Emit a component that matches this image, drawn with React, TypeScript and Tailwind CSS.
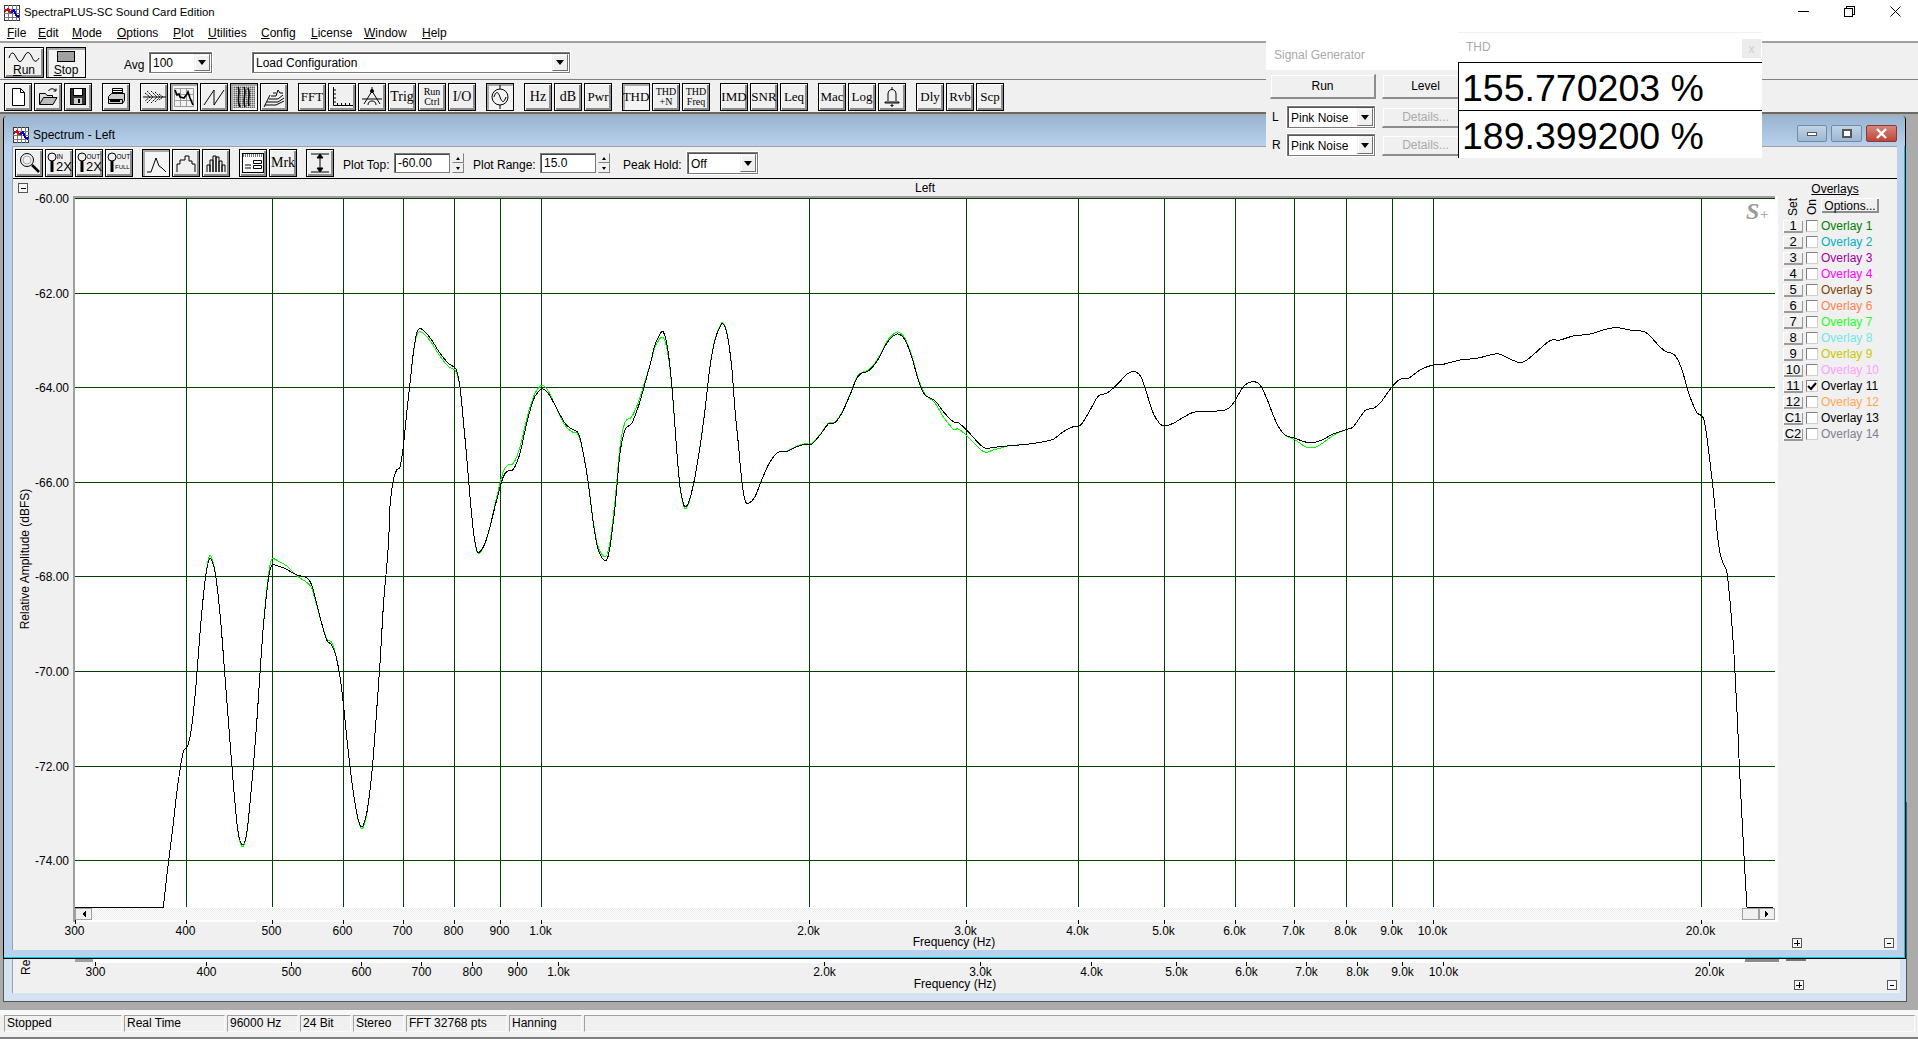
import React from "react";

// Menu entries carry the width of their slot in the native menu bar
const menus = [
    { label: "File", cls: "w-[31px]" },
    { label: "Edit", cls: "w-[34px]" },
    { label: "Mode", cls: "w-[45px]" },
    { label: "Options", cls: "w-[56px]" },
    { label: "Plot", cls: "w-[35px]" },
    { label: "Utilities", cls: "w-[53px]" },
    { label: "Config", cls: "w-[50px]" },
    { label: "License", cls: "w-[53px]" },
    { label: "Window", cls: "w-[58px]" },
    { label: "Help", cls: "w-[40px]" },
];

const overlays = [
    { set: "1", label: "Overlay 1", cls: "text-[#008000]" },
    { set: "2", label: "Overlay 2", cls: "text-[#00b0c0]" },
    { set: "3", label: "Overlay 3", cls: "text-[#a000a0]" },
    { set: "4", label: "Overlay 4", cls: "text-[#ff00ff]" },
    { set: "5", label: "Overlay 5", cls: "text-[#804000]" },
    { set: "6", label: "Overlay 6", cls: "text-[#ff8050]" },
    { set: "7", label: "Overlay 7", cls: "text-[#20ff20]" },
    { set: "8", label: "Overlay 8", cls: "text-[#70e8e8]" },
    { set: "9", label: "Overlay 9", cls: "text-[#c8c800]" },
    { set: "10", label: "Overlay 10", cls: "text-[#ffa0ff]" },
    { set: "11", label: "Overlay 11", cls: "text-black", on: true },
    { set: "12", label: "Overlay 12", cls: "text-[#ffa850]" },
    { set: "C1", label: "Overlay 13", cls: "text-black" },
    { set: "C2", label: "Overlay 14", cls: "text-[#808090]" },
];

const status = [
    { label: "Stopped", cls: "w-[118px]" },
    { label: "Real Time", cls: "w-[101px]" },
    { label: "96000 Hz", cls: "w-[71px]" },
    { label: "24 Bit", cls: "w-[51px]" },
    { label: "Stereo", cls: "w-[51px]" },
    { label: "FFT 32768 pts", cls: "w-[101px]" },
    { label: "Hanning", cls: "w-[73px]" },
    { label: "", cls: "w-[1331px]" },
];

// Curve traced off the reference, as [x, y] pairs in crop coordinates
const crop = (ox: number, oy: number, sy: number, pts: number[]) => {
    const out: [number, number][] = [];
    for (let i = 0; i < pts.length; i += 2) {
        out.push([ox + pts[i] / 3, oy + pts[i + 1] / sy]);
    }
    return out;
};

const curve: [number, number][] = [
    ...crop(150, 540, 3, [
        40, 1101, 50, 1010, 60, 930, 70, 850, 80, 760, 90, 690, 100, 635, 112, 620, 122, 580, 130, 520, 140, 410, 150,
        280, 160, 170, 170, 90, 181, 55, 195, 95, 205, 170, 215, 280, 225, 410, 235, 540, 245, 670, 255, 790, 265, 880,
        278, 915, 290, 880, 300, 790, 310, 680, 320, 550, 330, 400, 340, 260, 350, 160, 358, 100, 366, 75, 385, 78, 410,
        88, 440, 105, 470, 113, 485, 135, 500, 190, 515, 250, 530, 300, 545, 315, 557, 345, 570, 410, 580, 490, 590, 590,
        600, 680, 612, 770, 625, 840, 637, 860, 650, 820, 660, 750, 670, 650, 680, 510, 690, 370, 700, 200, 710, 80, 716,
        0,
    ]),
    ...crop(150, 310, 3, [
        720, 590, 730, 510, 740, 480, 750, 470, 760, 410, 770, 310, 780, 220, 790, 130, 800, 70, 810, 56, 825, 65, 845,
        90, 870, 130, 895, 160, 918, 178, 930, 230, 940, 330, 950, 440, 960, 560, 970, 660, 980, 720, 990, 725, 1005,
        700, 1020, 650, 1040, 570, 1060, 500, 1075, 482, 1090, 478, 1110, 430, 1130, 340, 1150, 270, 1165, 245, 1178,
        237, 1195, 250, 1220, 295, 1245, 340, 1265, 357, 1285, 370, 1300, 430, 1315, 520, 1330, 640, 1345, 720, 1367,
        752, 1380, 710, 1395, 590, 1410, 430, 1425, 360, 1445, 340, 1465, 290, 1485, 220, 1500, 165,
    ]),
    ...crop(640, 310, 3, [
        45, 105, 60, 72, 70, 66, 80, 100, 90, 170, 100, 280, 110, 420, 120, 530, 130, 580, 138, 590, 150, 565, 165, 500,
        180, 410, 195, 300, 210, 170, 225, 90, 240, 50, 250, 42, 262, 75, 275, 170, 285, 300, 295, 400, 305, 510, 315,
        570, 325, 580, 345, 560, 365, 510, 385, 465, 405, 435, 420, 425, 440, 425, 470, 410, 495, 403, 515, 402, 540,
        375, 565, 342, 585, 338, 605, 310, 630, 255, 650, 205, 665, 190, 685, 183, 710, 155, 740, 100, 760, 78, 775, 72,
        795, 90, 815, 140, 835, 210, 855, 255, 885, 272, 910, 305, 940, 335, 955, 338, 980, 360, 1030, 412, 1060, 412,
        1110, 407, 1160, 403, 1210, 395, 1240, 388, 1270, 365, 1300, 350, 1322, 345, 1345, 310, 1375, 258, 1400, 250,
        1430, 225, 1455, 198,
    ]),
    ...crop(1130, 310, 3, [
        0, 187, 20, 187, 35, 205, 50, 250, 70, 310, 90, 342, 105, 347, 130, 340, 160, 322, 190, 307, 220, 305, 285, 300,
        310, 280, 340, 230, 370, 215, 390, 225, 410, 265, 440, 340, 465, 375, 495, 385, 530, 397, 555, 397, 580, 388,
        610, 372, 650, 358, 670, 350, 705, 302, 730, 295, 750, 280, 785, 232, 810, 208, 835, 205, 870, 180, 905, 166,
        940, 163, 990, 150, 1040, 145, 1090, 133, 1110, 133, 1165, 157, 1190, 150, 1220, 125, 1260, 92, 1290, 90, 1330,
        78, 1380, 72, 1430, 57, 1460, 53, 1500, 60,
    ]),
    ...crop(1600, 310, 2.57, [
        130, 55, 150, 67, 180, 95, 200, 108, 220, 113, 235, 130, 250, 165, 265, 210, 280, 245, 292, 265, 305, 272, 313,
        285, 322, 335, 330, 390, 338, 450, 345, 510, 352, 575, 360, 625, 370, 652, 380, 672, 388, 730, 395, 800, 402,
        885, 407, 970, 413, 1070, 418, 1170, 424, 1270, 430, 1370, 435, 1450, 441, 1535,
    ]),
];

// Where the green trace leaves the black one: [x, dy]
const greenOffset: [number, number][] = [
    [75, 0], [205, 0], [210, -3], [216, 0], [236, 0], [243, 2], [250, 0], [262, 0], [272, -6], [285, -4], [295, 0], [305, 5],
    [313, 3], [322, 0], [331, -3], [337, 0], [355, 0], [363, 2], [372, 0], [410, 0], [420, 3], [450, 3], [470, 0], [480, 1],
    [490, 0], [505, -6], [520, -6], [533, -3], [542, -4], [555, 0], [570, 3], [585, 0], [627, -8], [640, -4], [650, 0],
    [663, 6], [675, 0], [686, 2], [695, 0], [723, -1], [740, 0], [880, -1], [895, -2], [925, -1], [940, 4], [950, 8], [960, 6],
    [985, 4], [1010, 0], [1290, 0], [1310, 6], [1340, 0], [1773, 0],
];

const offsetAt = (x: number) => {
    for (let i = 1; i < greenOffset.length; i++) {
        const [x0, d0] = greenOffset[i - 1];
        const [x1, d1] = greenOffset[i];
        if (x <= x1) return d0 + ((d1 - d0) * (x - x0)) / (x1 - x0);
    }
    return 0;
};

// Catmull-Rom through the traced points
const toPath = (pts: [number, number][]) => {
    let d = `M${pts[0][0]} ${pts[0][1]}`;
    for (let i = 0; i < pts.length - 1; i++) {
        const p0 = pts[Math.max(i - 1, 0)];
        const p1 = pts[i];
        const p2 = pts[i + 1];
        const p3 = pts[Math.min(i + 2, pts.length - 1)];
        const c1x = p1[0] + (p2[0] - p0[0]) / 6;
        const c1y = p1[1] + (p2[1] - p0[1]) / 6;
        const c2x = p2[0] - (p3[0] - p1[0]) / 6;
        const c2y = p2[1] - (p3[1] - p1[1]) / 6;
        d += `C${c1x.toFixed(1)} ${c1y.toFixed(1)} ${c2x.toFixed(1)} ${c2y.toFixed(1)} ${p2[0].toFixed(1)} ${p2[1].toFixed(1)}`;
    }
    return d;
};

const blackPath = toPath(curve);
const greenPath = toPath(curve.map(([x, y]) => [x, y + offsetAt(x)] as [number, number]));

const freqs = [
    { f: 300, label: "300" },
    { f: 400, label: "400" },
    { f: 500, label: "500" },
    { f: 600, label: "600" },
    { f: 700, label: "700" },
    { f: 800, label: "800" },
    { f: 900, label: "900" },
    { f: 1000, label: "1.0k" },
    { f: 2000, label: "2.0k" },
    { f: 3000, label: "3.0k" },
    { f: 4000, label: "4.0k" },
    { f: 5000, label: "5.0k" },
    { f: 6000, label: "6.0k" },
    { f: 7000, label: "7.0k" },
    { f: 8000, label: "8.0k" },
    { f: 9000, label: "9.0k" },
    { f: 10000, label: "10.0k" },
    { f: 20000, label: "20.0k" },
];
const frontX = (f: number) => Math.floor(75 + 891.8 * Math.log10(f / 300)) + 0.5;
const backX = (f: number) => Math.round(94 + 885 * Math.log10(f / 300)) + 0.5;
const dbRows = [-60, -62, -64, -66, -68, -70, -72, -74];
const dbY = (db: number) => Math.round(198 + (-60 - db) * 47.3) + 0.5;

function Btn({ pressed, className, children }: { pressed?: boolean; className?: string; children?: React.ReactNode }) {
    return (
        <div
            className={`flex items-center justify-center border border-black overflow-hidden ${
                pressed
                    ? "bg-[#f4f4f4] shadow-[inset_2px_2px_0_#a8a8a8]"
                    : "bg-[#f0f0f0] shadow-[inset_1px_1px_0_#fff,inset_-2px_-2px_0_#8c8c8c]"
            } ${className ?? "w-7 h-7"}`}
        >
            {children}
        </div>
    );
}

function Serif({ top, bottom, big }: { top: string; bottom?: string; big?: boolean }) {
    return (
        <div className={`font-['Liberation_Serif',serif] text-center -mt-px ${bottom ? "text-[10px] leading-[10px]" : big ? "text-[14px]" : "text-[13px]"}`}>
            <div>{top}</div>
            {bottom && <div>{bottom}</div>}
        </div>
    );
}

function Ico({ children }: { children: React.ReactNode }) {
    return (
        <svg width="24" height="24" viewBox="0 0 24 24" fill="none" stroke="black" strokeWidth="1">
            {children}
        </svg>
    );
}

function Arrow() {
    return <div className="w-0 h-0 border-l-[4px] border-r-[4px] border-t-[5px] border-l-transparent border-r-transparent border-t-black" />;
}

function Combo({ value, className, arrowCls }: { value: string; className: string; arrowCls?: string }) {
    return (
        <div className={`flex bg-white border border-[#7a7a7a] shadow-[inset_1px_1px_0_#555,0_0_0_1px_#fff] pl-[3px] text-[12px] ${className}`}>
            <span className="flex-1 flex items-center whitespace-nowrap pt-px">{value}</span>
            <div className={`flex items-center justify-center bg-[#f0f0f0] border border-[#f0f0f0] border-r-[#707070] border-b-[#707070] shadow-[inset_1px_1px_0_#fff] m-px ${arrowCls ?? "w-[16px]"}`}>
                <Arrow />
            </div>
        </div>
    );
}

function Spin() {
    return (
        <div className="flex flex-col w-[12px] h-[20px] ml-[2px]">
            {[0, 1].map((i) => (
                <div key={i} className="flex-1 flex items-center justify-center border border-[#f0f0f0] border-r-[#808080] border-b-[#808080] bg-[#f0f0f0]">
                    <div className={`w-0 h-0 border-l-[2px] border-r-[2px] border-l-transparent border-r-transparent ${i === 0 ? "border-b-[3px] border-b-black" : "border-t-[3px] border-t-black"}`} />
                </div>
            ))}
        </div>
    );
}

function InlineInput({ value }: { value: string }) {
    return (
        <div className="flex items-center w-[56px] h-[20px] bg-white border border-[#7a7a7a] shadow-[inset_1px_1px_0_#444] pl-[3px] text-[12px]">{value}</div>
    );
}

function AppIcon() {
    return (
        <svg width="16" height="16" viewBox="0 0 16 16" shapeRendering="crispEdges">
            <rect x="0.5" y="0.5" width="15" height="15" fill="#fff" stroke="#333" />
            <path d="M4 0V16M8 0V16M12 0V16M0 4H16M0 8H16M0 12H16" stroke="#777" />
            <path d="M1 6L4 4L6 7L9 6" stroke="#e00000" strokeWidth="2" fill="none" />
            <path d="M7 8L10 5L12 10L15 12" stroke="#0000d0" strokeWidth="2" fill="none" />
        </svg>
    );
}

function MiniBox({ plus }: { plus?: boolean }) {
    return (
        <svg width="10" height="10" viewBox="0 0 10 10" shapeRendering="crispEdges">
            <rect x="0.5" y="0.5" width="9" height="9" fill="#f8f8f8" stroke="#555" />
            <path d={plus ? "M2 5H8M5 2V8" : "M3 5H7"} stroke="#000" />
        </svg>
    );
}

// Row of tool buttons, one array per group
const mainTools: React.ReactNode[][] = [
    [
        <Btn key="new">
            <Ico><path d="M6.5 3.5H14.5L18.5 7.5V20.5H6.5Z M14.5 3.5V7.5H18.5" fill="#fff" /></Ico>
        </Btn>,
        <Btn key="open">
            <Ico>
                <path d="M3.5 19.5V8.5H9.5L11 10.5H16.5V13" fill="#ddd" />
                <path d="M3.5 19.5H17L21 12.5H7.5Z" fill="#bbb" />
                <path d="M12.5 6C14 3 18 3 20 6M20 6V3.5M20 6H17.5" />
            </Ico>
        </Btn>,
        <Btn key="save">
            <Ico>
                <rect x="4.5" y="3.5" width="15" height="16" fill="#333" />
                <rect x="7.5" y="3.5" width="9" height="7" fill="#fff" />
                <rect x="8" y="13" width="8" height="6" fill="#ccc" stroke="none" />
                <rect x="12" y="14" width="2" height="4" fill="#000" stroke="none" />
            </Ico>
        </Btn>,
    ],
    [
        <Btn key="print">
            <Ico>
                <path d="M8.5 3.5H18.5V10.5H8.5Z M9 5.5H18M9 7.5H18" fill="#fff" />
                <path d="M4.5 11.5L7.5 8.5H20.5V15.5L18.5 18.5H4.5Z" fill="#ccc" />
                <path d="M4.5 14.5H18.5V18.5" />
                <path d="M6 16H16" strokeWidth="2" />
            </Ico>
        </Btn>,
    ],
    [
        <Btn key="wave">
            <Ico>
                <path d="M1 12H24" />
                <path d="M3 8L8 12L3 16M5 6L11 12L5 18M9 6L15 12L9 18M13 7L18 12L13 17M17 9L21 12L17 15" strokeDasharray="2 1" />
            </Ico>
        </Btn>,
        <Btn key="spec" pressed>
            <Ico>
                <path d="M2.5 3.5H21.5V21.5H2.5Z M8.5 3.5V21.5M14.5 3.5V21.5M2.5 9.5H21.5M2.5 15.5H21.5" stroke="#999" />
                <path d="M3 5L5 10L7 9L8 12L12 13L15 9L16 7L18 13L21 20" strokeWidth="1.7" />
            </Ico>
        </Btn>,
        <Btn key="saw">
            <Ico><path d="M2 20L12 5V20L22 5" /></Ico>
        </Btn>,
        <Btn key="water" pressed>
            <svg width="24" height="24" viewBox="0 0 24 24" fill="none" stroke="black">
                <defs>
                    <pattern id="speck" width="2" height="2" patternUnits="userSpaceOnUse">
                        <rect width="2" height="2" fill="#aaa" stroke="none" />
                        <rect width="1" height="1" fill="#666" stroke="none" />
                        <rect x="1" y="1" width="1" height="1" fill="#ddd" stroke="none" />
                    </pattern>
                </defs>
                <rect x="1" y="1" width="22" height="22" fill="url(#speck)" stroke="none" />
                <path d="M6 2C9 7 4 14 8 22M12 2C15 8 10 14 13 22M16 3C19 9 15 15 17 21" strokeWidth="1.6" />
            </svg>
        </Btn>,
        <Btn key="3d">
            <Ico>
                <path d="M3 20H14L22 16M5 17H16L22 13M7 14H16L21 10M9 11H14L16 5L18 8L21 8M11 8H14" />
                <path d="M2 22L8 10" />
            </Ico>
        </Btn>,
    ],
    [
        <Btn key="fft"><Serif top="FFT" /></Btn>,
        <Btn key="axis">
            <Ico>
                <path d="M3.5 2V20.5H23" />
                <path d="M3 5H6M3 9H6M3 13H6M3 17H6M7.5 18V20M11.5 18V20M15.5 18V20M19.5 18V20" />
            </Ico>
        </Btn>,
        <Btn key="compass">
            <Ico>
                <path d="M12 2V6M12 6L4 19M12 6L20 19M2 14H22" />
                <path d="M8 20C8 17 10 16 12 16C14 16 16 17 16 20" />
                <circle cx="12" cy="6" r="1.5" fill="#000" />
            </Ico>
        </Btn>,
        <Btn key="trig"><Serif top="Trig" big /></Btn>,
        <Btn key="run"><Serif top="Run" bottom="Ctrl" /></Btn>,
        <Btn key="io"><Serif top="I/O" big /></Btn>,
    ],
    [
        <Btn key="gen" pressed>
            <Ico>
                <circle cx="12" cy="12" r="8" />
                <path d="M12 0V4M12 20V24M6 12C8 6 10 6 12 12C14 18 16 18 18 12" />
            </Ico>
        </Btn>,
    ],
    [
        <Btn key="hz"><Serif top="Hz" big /></Btn>,
        <Btn key="db"><Serif top="dB" big /></Btn>,
        <Btn key="pwr"><Serif top="Pwr" /></Btn>,
    ],
    [
        <Btn key="thd" pressed><Serif top="THD" /></Btn>,
        <Btn key="thdn"><Serif top="THD" bottom="+N" /></Btn>,
        <Btn key="thdf"><Serif top="THD" bottom="Freq" /></Btn>,
    ],
    [
        <Btn key="imd"><Serif top="IMD" /></Btn>,
        <Btn key="snr"><Serif top="SNR" /></Btn>,
        <Btn key="leq"><Serif top="Leq" /></Btn>,
    ],
    [
        <Btn key="mac"><Serif top="Mac" /></Btn>,
        <Btn key="log"><Serif top="Log" /></Btn>,
        <Btn key="bell">
            <Ico>
                <path d="M12 2V4M8 16V9C8 6 10 4.5 12 4.5C14 4.5 16 6 16 9V16M5 17H19V18H5ZM11 20H13V21H11Z" />
            </Ico>
        </Btn>,
    ],
    [
        <Btn key="dly"><Serif top="Dly" /></Btn>,
        <Btn key="rvb"><Serif top="Rvb" /></Btn>,
        <Btn key="scp"><Serif top="Scp" /></Btn>,
    ],
];

function ZoomIcon({ top, bottom }: { top: string; bottom: string }) {
    const full = bottom === "FULL";
    return (
        <svg width="26" height="26" viewBox="0 0 26 26" fill="none" stroke="black">
            <circle cx="6" cy="7" r="4" />
            <path d="M6 11V22" strokeWidth="3" />
            <text x="10.5" y="9" fontSize="6.5" fill="#000" stroke="none">{top}</text>
            <text x={full ? 9 : 10} y={full ? 19 : 21} fontSize={full ? 6 : 13} fill="#000" stroke="none">{bottom}</text>
        </svg>
    );
}

function SpectrumTools() {
    return (
        <div className="flex items-start gap-[9px]">
            <div className="flex gap-0.5">
                <Btn>
                    <Ico>
                        <circle cx="10" cy="9" r="6.5" />
                        <circle cx="10" cy="9" r="4" stroke="#aaa" />
                        <path d="M15 14L22 21" strokeWidth="2.5" />
                    </Ico>
                </Btn>
                <Btn><ZoomIcon top="IN" bottom="2X" /></Btn>
                <Btn><ZoomIcon top="OUT" bottom="2X" /></Btn>
                <Btn><ZoomIcon top="OUT" bottom="FULL" /></Btn>
            </div>
            <div className="flex gap-0.5">
                <Btn pressed>
                    <Ico><path d="M3 21H7L12 7L15 15L18 17L22 21" /></Ico>
                </Btn>
                <Btn>
                    <Ico><path d="M3 21V13H6V9H11V5H15V10H18V13H21V21" /></Ico>
                </Btn>
                <Btn>
                    <Ico><path d="M3 21V14H6V21M6 21V9H9V21M9 21V5H12V21M12 21V6H15V21M15 21V10H18V21M18 21V14H21V21" /></Ico>
                </Btn>
            </div>
            <div className="flex gap-0.5">
                <Btn>
                    <Ico>
                        <rect x="1.5" y="2.5" width="21" height="19" fill="#fff" />
                        <path d="M2 4.5H22" strokeWidth="3" stroke="#777" strokeDasharray="1 1" />
                        <path d="M12.5 9.5H20.5V12.5H12.5ZM12.5 14.5H20.5V17.5H12.5ZM4 14H10M4 17H10" />
                    </Ico>
                </Btn>
                <Btn><Serif top="Mrk" big /></Btn>
            </div>
            <Btn>
                <Ico>
                    <path d="M3 3H21M3 21H21M12 4V20" />
                    <path d="M9 7L12 3L15 7ZM9 17L12 21L15 17Z" fill="#000" />
                </Ico>
            </Btn>
        </div>
    );
}

function FrontChart() {
    const textCls = "text-[12px] fill-black";
    return (
        <svg width="1765" height="771" viewBox="13 179 1765 771" className="flex-none">
            <defs>
                <pattern id="hatch" width="2" height="2" patternUnits="userSpaceOnUse">
                    <rect width="2" height="2" fill="#fff" />
                    <rect width="1" height="1" fill="#ececec" />
                    <rect x="1" y="1" width="1" height="1" fill="#ececec" />
                </pattern>
            </defs>
            <text x="925" y="192" textAnchor="middle" className={textCls}>Left</text>
            <g shapeRendering="crispEdges">
                <rect x="18.5" y="183.5" width="9" height="9" fill="#f8f8f8" stroke="#555" />
                <path d="M21 188H26" stroke="#000" />
                <rect x="73" y="196" width="1705" height="726" fill="#fff" />
                <path d="M73 196.5H1775M73.5 196V922M74.5 196V922" stroke="#a0a0a0" />
                <path d="M75 197.5H1775" stroke="#a0a0a0" />
                <rect x="75" y="908" width="1700" height="12" fill="url(#hatch)" />
                {dbRows.map((db) => (
                    <path key={db} d={`M75 ${dbY(db)}H1775`} stroke="#004000" />
                ))}
                {freqs.slice(1).map((t) => (
                    <path key={t.f} d={`M${frontX(t.f)} 198V907`} stroke="#004000" />
                ))}
                {freqs.map((t) => (
                    <path key={t.f} d={`M${frontX(t.f)} 920V924`} stroke="#000" />
                ))}
                {/* Scrollbar buttons */}
                <rect x="75.5" y="908.5" width="16" height="11" fill="#f0f0f0" stroke="#a0a0a0" />
                <path d="M82 914L86 910.5V917.5Z" fill="#000" />
                <rect x="1742.5" y="908.5" width="16" height="11" fill="#f0f0f0" stroke="#a0a0a0" />
                <rect x="1759.5" y="908.5" width="15" height="11" fill="#f0f0f0" stroke="#a0a0a0" />
                <path d="M1769 914L1765 910.5V917.5Z" fill="#000" />
            </g>
            <g fill="none" shapeRendering="crispEdges">
                <path d={greenPath} stroke="#00ff00" />
                <path d={blackPath} stroke="#000" />
                <path d="M75 907.5H163.5M1747 907.5H1773" stroke="#000" />
            </g>
            {dbRows.map((db) => (
                <text key={db} x="69" y={dbY(db) + 4} textAnchor="end" className={textCls}>{db.toFixed(2)}</text>
            ))}
            {freqs.map((t) => (
                <text key={t.f} x={frontX(t.f) - 1} y="935" textAnchor="middle" className={textCls}>{t.label}</text>
            ))}
            <text x="954" y="946" textAnchor="middle" className={textCls}>Frequency (Hz)</text>
            <text transform="rotate(-90 29 559)" x="29" y="559" textAnchor="middle" className={textCls}>Relative Amplitude (dBFS)</text>
            <text x="1746" y="219" fontSize="24" fontWeight="700" fontStyle="italic" fill="#9a9a9a" className="font-['Liberation_Serif',serif]">S</text>
            <text x="1760" y="219" fontSize="15" fill="#9a9a9a" className="font-['Liberation_Serif',serif]">+</text>
        </svg>
    );
}

function BackChart() {
    const textCls = "text-[12px] fill-black";
    return (
        <svg width="1888" height="34" viewBox="12 959 1888 34" className="flex-none overflow-hidden">
            <g shapeRendering="crispEdges">
                <rect x="92" y="959" width="1686" height="4" fill="#fff" />
                <rect x="74" y="959" width="18" height="3" fill="#a0a0a0" />
                <rect x="1744" y="959" width="34" height="3" fill="#8c8c8c" />
                <rect x="1785" y="959" width="20" height="2" fill="#777" />
                {freqs.map((t) => (
                    <path key={t.f} d={`M${backX(t.f)} 962V966`} stroke="#000" />
                ))}
                <rect x="1793.5" y="980.5" width="9" height="9" fill="#f8f8f8" stroke="#555" />
                <path d="M1795 985H1801M1798 982V988" stroke="#000" />
                <rect x="1886.5" y="980.5" width="9" height="9" fill="#f8f8f8" stroke="#555" />
                <path d="M1889 985H1893" stroke="#000" />
            </g>
            {freqs.map((t) => (
                <text key={t.f} x={backX(t.f)} y="976" textAnchor="middle" className={textCls}>{t.label}</text>
            ))}
            <text x="954" y="988" textAnchor="middle" className={textCls}>Frequency (Hz)</text>
            <text transform="rotate(-90 29 975)" x="29" y="975" className={textCls}>Re</text>
        </svg>
    );
}

function OverlayPanel() {
    return (
        <div className="flex-1 flex flex-col pl-[5px] text-[12px]">
            <div className="w-[104px] h-[14px] mt-[3px] text-center leading-[14px] underline">Overlays</div>
            <div className="flex h-[20px] mt-[2px]">
                <div className="w-[20px] h-[18px] flex items-center justify-center">
                    <span className="[writing-mode:vertical-rl] rotate-180 leading-none">Set</span>
                </div>
                <div className="w-[12px] ml-[3px] h-[18px] flex items-center justify-center">
                    <span className="[writing-mode:vertical-rl] rotate-180 leading-none">On</span>
                </div>
                <div className="ml-[3px] w-[58px] h-[15px] flex items-center justify-center bg-[#f0f0f0] shadow-[inset_1px_1px_0_#fff,inset_-2px_-2px_0_#8c8c8c]">Options...</div>
            </div>
            {overlays.map((o) => (
                <div key={o.set} className="flex items-center h-4">
                    <div className="w-5 h-[13px] flex items-center justify-center text-[13px] leading-[12px] pb-px bg-[#f0f0f0] shadow-[inset_1px_1px_0_#fff,inset_-1px_-2px_0_#9a9a9a]">{o.set}</div>
                    <div className="ml-[3px] w-[12px] h-[12px] flex items-center justify-center bg-white border border-[#d0d0d0] border-t-[#808080] border-l-[#808080]">
                        {o.on && (
                            <svg width="10" height="10" viewBox="0 0 10 10" fill="none" stroke="black" strokeWidth="2">
                                <path d="M1 5L4 8L9 2" />
                            </svg>
                        )}
                    </div>
                    <span className={`ml-[3px] ${o.cls}`}>{o.label}</span>
                </div>
            ))}
            <div className="mt-auto flex justify-between pl-[9px] pr-[3px] pb-[2px]">
                <MiniBox plus />
                <MiniBox />
            </div>
        </div>
    );
}

function CaptionButton({ className, children }: { className: string; children: React.ReactNode }) {
    return <div className={`h-[17px] flex items-center justify-center rounded-[2px] border ${className}`}>{children}</div>;
}

function SpectrumWindow() {
    return (
        <div className="absolute left-[3px] top-[2px] w-[1903px] h-[843px] flex flex-col rounded-t-[4px] bg-[#b9d1ea] border-x border-b border-black shadow-[inset_-1px_-1px_0_#00c8e6]">
            <div className="h-[30px] flex justify-between rounded-t-[4px] bg-gradient-to-b from-[#99b4d1] to-[#b9d1ea] pr-[8px]">
                <div className="flex items-center pl-[9px] pt-[8px] gap-[4px] text-[12px]">
                    <AppIcon />
                    <span>Spectrum - Left</span>
                </div>
                <div className="flex gap-[4px] pt-[9px]">
                    <CaptionButton className="w-[30px] border-[#6d8cab] bg-gradient-to-b from-[#c2d4e6] to-[#9db6d2]">
                        <div className="w-[10px] h-[4px] bg-white border border-[#555]" />
                    </CaptionButton>
                    <CaptionButton className="w-[31px] border-[#6d8cab] bg-gradient-to-b from-[#c2d4e6] to-[#9db6d2]">
                        <div className="w-[10px] h-[9px] bg-white border-2 border-[#555]" />
                    </CaptionButton>
                    <CaptionButton className="w-[31px] border-[#8a3a32] bg-gradient-to-b from-[#d8847a] to-[#b9473c]">
                        <svg width="13" height="11" viewBox="0 0 13 11" stroke="white" strokeWidth="2.4">
                            <path d="M2 1L11 10M11 1L2 10" />
                        </svg>
                    </CaptionButton>
                </div>
            </div>
            <div className="flex-1 flex flex-col ml-[8px] mr-[8px] mb-[8px] bg-[#f0f0f0] border-l border-t border-[#a0a0a0] text-[12px]">
                <div className="h-[32px] flex items-start pt-[2px] pl-[2px] border-b border-black">
                    <SpectrumTools />
                    <span className="ml-[9px] w-[51px] mt-[7px] whitespace-nowrap">Plot Top:</span>
                    <div className="mt-[4px] flex">
                        <InlineInput value="-60.00" />
                        <Spin />
                    </div>
                    <span className="ml-[9px] w-[67px] mt-[7px] whitespace-nowrap">Plot Range:</span>
                    <div className="mt-[4px] flex">
                        <InlineInput value="15.0" />
                        <Spin />
                    </div>
                    <span className="ml-[13px] w-[64px] mt-[7px] whitespace-nowrap">Peak Hold:</span>
                    <Combo value="Off" className="w-[71px] h-[22px] mt-[3px]" arrowCls="w-[16px]" />
                </div>
                <div className="flex-1 flex min-h-0">
                    <FrontChart />
                    <OverlayPanel />
                </div>
            </div>
        </div>
    );
}

function BackWindow() {
    return (
        <div className="absolute left-[3px] bottom-[8px] w-[1904px] h-[200px] flex flex-col justify-end bg-[#d4e3f2] border border-[#555]">
            <div className="ml-[8px] mr-[6px] mb-[8px] bg-[#f0f0f0] border-l border-[#a0a0a0] text-[12px] h-[60px] flex flex-col justify-end">
                <BackChart />
            </div>
        </div>
    );
}

function SignalGenerator() {
    const btn = "flex items-center justify-center bg-[#f0f0f0] border border-[#f0f0f0] border-r-[#8c8c8c] border-b-[#8c8c8c] border-b-2 border-r-2 shadow-[inset_1px_1px_0_#fff]";
    return (
        <div className="absolute left-[1266px] top-[39px] w-[192px] h-[118px] flex flex-col bg-[#f0f0f0] text-[12px]">
            <div className="h-[31px] bg-white flex items-center pl-[8px] text-[#aaaaaa]">Signal Generator</div>
            <div className="flex pl-[4px] pt-[4px]">
                <div className={`w-[106px] h-[25px] shrink-0 ${btn}`}>Run</div>
                <div className={`w-[88px] h-[25px] ml-[6px] shrink-0 ${btn}`}>Level</div>
            </div>
            {["L", "R"].map((ch, i) => (
                <div key={ch} className={`flex items-center pl-[6px] ${i === 0 ? "mt-[7px]" : "mt-[6px]"}`}>
                    <span className="w-[15px] shrink-0">{ch}</span>
                    <Combo value="Pink Noise" className="w-[88px] h-[22px] shrink-0" />
                    <div className={`w-[88px] h-[21px] ml-[7px] shrink-0 text-[#aaaaaa] ${btn}`}>Details...</div>
                </div>
            ))}
        </div>
    );
}

function ThdWindow() {
    return (
        <div className="absolute left-[1458px] top-[32px] w-[304px] h-[126px] flex flex-col bg-white border-t border-[#f0f0f0]">
            <div className="h-[29px] flex justify-between pl-[8px] text-[12px] text-[#aaaaaa]">
                <span className="mt-[5px]">THD</span>
                <div className="w-[19px] h-[19px] mt-[6px] mr-px bg-[#ececec] flex items-center justify-center text-[#cccccc]">x</div>
            </div>
            <div className="flex-1 flex flex-col border-l border-t border-black">
                <div className="h-[48px] flex items-center pl-[3px] pt-[4px] text-[37.5px] leading-none whitespace-nowrap border-b border-black">155.770203 %</div>
                <div className="flex-1 flex items-center pl-[3px] pt-[4px] text-[37.5px] leading-none whitespace-nowrap">189.399200 %</div>
            </div>
        </div>
    );
}

export default function App() {
    return (
        <div className="relative w-[1918px] h-[1039px] overflow-hidden flex flex-col bg-[#f0f0f0] text-black font-['Liberation_Sans',Arial,sans-serif]">
            {/* Title bar */}
            <div className="h-[24px] flex justify-between bg-white text-[12px]">
                <div className="flex items-center pl-[4px] gap-[4px] pt-px">
                    <AppIcon />
                    <span className="text-[11.4px]">SpectraPLUS-SC Sound Card Edition</span>
                </div>
                <div className="flex h-[22px]">
                    <div className="w-[46px] flex items-center justify-center">
                        <div className="w-[11px] h-px bg-black" />
                    </div>
                    <div className="w-[46px] flex items-center justify-center">
                        <svg width="11" height="11" viewBox="0 0 11 11" fill="none" stroke="black" shapeRendering="crispEdges">
                            <rect x="0.5" y="2.5" width="8" height="8" />
                            <path d="M2.5 2V0.5H10.5V8.5H9" />
                        </svg>
                    </div>
                    <div className="w-[46px] flex items-center justify-center">
                        <svg width="11" height="11" viewBox="0 0 11 11" stroke="black">
                            <path d="M0.5 0.5L10.5 10.5M10.5 0.5L0.5 10.5" />
                        </svg>
                    </div>
                </div>
            </div>
            {/* Menu */}
            <div className="h-[17px] flex items-center bg-white pl-[7px] text-[12px]">
                {menus.map((m) => (
                    <span key={m.label} className={m.cls}>
                        <u>{m.label[0]}</u>
                        {m.label.slice(1)}
                    </span>
                ))}
            </div>
            <div className="h-[2px] bg-[#a0a0a0]" />
            {/* Run / Stop strip */}
            <div className="h-[37px] flex items-start pt-[4px] pl-[4px] border-b border-[#808080] text-[12px]">
                <Btn className="w-10 h-[31px]">
                    <div className="flex flex-col items-center leading-[12px]">
                        <svg width="32" height="14" viewBox="0 0 32 14" fill="none" stroke="black">
                            <path d="M1 8C3 2 5 1 8 7C11 13 13 13 16 7C19 1 21 1 24 7C26 12 28 13 31 8" />
                        </svg>
                        <span><u>R</u>un</span>
                    </div>
                </Btn>
                <Btn pressed className="w-10 h-[31px] ml-0.5">
                    <div className="flex flex-col items-center leading-[12px] pt-[2px]">
                        <div className="w-[18px] h-[11px] bg-[#a0a0a0] border border-black mb-[2px]" />
                        <span><u>S</u>top</span>
                    </div>
                </Btn>
                <span className="ml-[38px] w-[25px] mt-[9px]">Avg</span>
                <Combo value="100" className="w-[63px] h-[21px] mt-[5px]" />
                <Combo value="Load Configuration" className="w-[318px] h-[21px] mt-[5px] ml-[40px]" />
            </div>
            {/* Main tool strip */}
            <div className="h-[34px] flex items-start pt-[3px] pl-[4px] gap-[10px] border-b-2 border-[#696969]">
                {mainTools.map((group, i) => (
                    <div key={i} className="flex gap-0.5">{group}</div>
                ))}
            </div>
            {/* MDI area */}
            <div className="relative flex-1 bg-[#ababab]">
                <BackWindow />
                <SpectrumWindow />
            </div>
            {/* Status bar */}
            <div className="h-[29px] flex items-start gap-[2px] pt-[5px] pl-[4px] border-b-2 border-[#808080] bg-[#f0f0f0] text-[12px] shadow-[inset_0_5px_0_#f8f8f8]">
                {status.map((s, i) => (
                    <div key={i} className={`h-[17px] flex items-center pl-[2px] pb-px border border-[#a0a0a0] border-r-[#fafafa] border-b-[#fafafa] ${s.cls}`}>{s.label}</div>
                ))}
            </div>
            <SignalGenerator />
            <ThdWindow />
        </div>
    );
}
